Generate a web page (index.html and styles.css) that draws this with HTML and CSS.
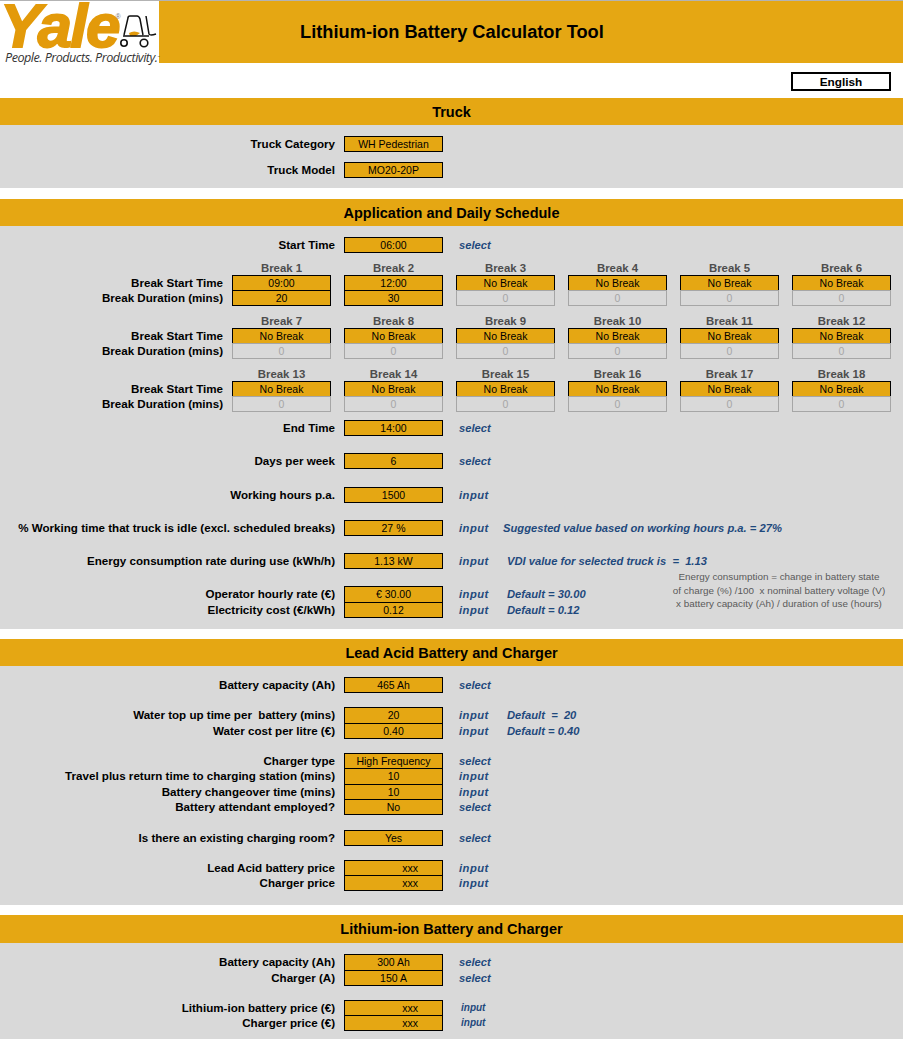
FILE: index.html
```html
<!DOCTYPE html>
<html lang="en">
<head>
<meta charset="utf-8">
<title>Lithium-ion Battery Calculator Tool</title>
<link rel="stylesheet" href="styles.css">
</head>
<body>
<header class="topbar">
  <svg class="logo" viewBox="0 0 159 62" role="img" aria-label="Yale logo">
    <rect width="159" height="62" fill="#fff"/>
    <text class="logo-word" x="0" y="45.5">Yale</text>
    <text class="logo-reg" x="115.5" y="18">®</text>
    <path d="M129 32 Q134 29 140 32 L136 35 L130 35 Z" fill="#e39a0a"/>
    <path d="M124 34 L128 17 Q128 15 130 15 L137 15 Q139 15 140 18 L143 34 M146 15 L149 33 Q150 35 156 33 M123 35 L149 35" fill="none" stroke="#111" stroke-width="1.5"/>
    <circle cx="124" cy="42" r="3.2" fill="#fff" stroke="#111" stroke-width="1.6"/>
    <circle cx="144" cy="42" r="3.8" fill="#fff" stroke="#111" stroke-width="1.6"/>
    <text class="logo-tag" x="5" y="61">People. Products. Productivity.<tspan class="logo-tm" dy="-4">™</tspan></text>
  </svg>
  <h1 class="title">Lithium-ion Battery Calculator Tool</h1>
</header>
<div class="langbar"><div class="lang">English</div></div>

<section class="section gap-11">
  <h2 class="section-head">Truck</h2>
  <div class="section-body pb-10">
    <div class="row"><div class="label">Truck Category</div><div class="box">WH Pedestrian</div></div>
    <div class="row mt-10"><div class="label">Truck Model</div><div class="box">MO20-20P</div></div>
  </div>
</section>

<section class="section gap-10">
  <h2 class="section-head">Application and Daily Schedule</h2>
  <div class="section-body pb-11">
    <div class="row"><div class="label">Start Time</div><div class="box">06:00</div><div class="hint">select</div></div>

    <div class="breaks mt-7">
      <div class="break-row"><div class="break-label"></div><div class="break-set">
        <div class="break-title">Break 1</div><div class="break-title">Break 2</div><div class="break-title">Break 3</div><div class="break-title">Break 4</div><div class="break-title">Break 5</div><div class="break-title">Break 6</div>
      </div></div>
      <div class="break-row"><div class="label break-label">Break Start Time</div><div class="break-set">
        <div class="box">09:00</div><div class="box">12:00</div><div class="box">No Break</div><div class="box">No Break</div><div class="box">No Break</div><div class="box">No Break</div>
      </div></div>
      <div class="break-row stack"><div class="label break-label">Break Duration (mins)</div><div class="break-set">
        <div class="box">20</div><div class="box">30</div><div class="box off">0</div><div class="box off">0</div><div class="box off">0</div><div class="box off">0</div>
      </div></div>
    </div>

    <div class="breaks mt-7">
      <div class="break-row"><div class="break-label"></div><div class="break-set">
        <div class="break-title">Break 7</div><div class="break-title">Break 8</div><div class="break-title">Break 9</div><div class="break-title">Break 10</div><div class="break-title">Break 11</div><div class="break-title">Break 12</div>
      </div></div>
      <div class="break-row"><div class="label break-label">Break Start Time</div><div class="break-set">
        <div class="box">No Break</div><div class="box">No Break</div><div class="box">No Break</div><div class="box">No Break</div><div class="box">No Break</div><div class="box">No Break</div>
      </div></div>
      <div class="break-row stack"><div class="label break-label">Break Duration (mins)</div><div class="break-set">
        <div class="box off">0</div><div class="box off">0</div><div class="box off">0</div><div class="box off">0</div><div class="box off">0</div><div class="box off">0</div>
      </div></div>
    </div>

    <div class="breaks mt-7">
      <div class="break-row"><div class="break-label"></div><div class="break-set">
        <div class="break-title">Break 13</div><div class="break-title">Break 14</div><div class="break-title">Break 15</div><div class="break-title">Break 16</div><div class="break-title">Break 17</div><div class="break-title">Break 18</div>
      </div></div>
      <div class="break-row"><div class="label break-label">Break Start Time</div><div class="break-set">
        <div class="box">No Break</div><div class="box">No Break</div><div class="box">No Break</div><div class="box">No Break</div><div class="box">No Break</div><div class="box">No Break</div>
      </div></div>
      <div class="break-row stack"><div class="label break-label">Break Duration (mins)</div><div class="break-set">
        <div class="box off">0</div><div class="box off">0</div><div class="box off">0</div><div class="box off">0</div><div class="box off">0</div><div class="box off">0</div>
      </div></div>
    </div>

    <div class="row mt-8"><div class="label">End Time</div><div class="box">14:00</div><div class="hint">select</div></div>
    <div class="row mt-17"><div class="label">Days per week</div><div class="box">6</div><div class="hint">select</div></div>
    <div class="row mt-18"><div class="label">Working hours p.a.</div><div class="box">1500</div><div class="hint hint-in">input</div></div>
    <div class="row mt-17"><div class="label">% Working time that truck is idle (excl. scheduled breaks)</div><div class="box">27 %</div><div class="hint hint-in">input</div><div class="note note-wide">Suggested value based on working hours p.a. = 27%</div></div>
    <div class="row mt-17"><div class="label">Energy consumption rate during use (kWh/h)</div><div class="box">1.13 kW</div><div class="hint hint-in">input</div><div class="note">VDI value for selected truck is &nbsp;=&nbsp; 1.13</div></div>
    <div class="rates mt-17">
      <div class="rates-rows">
        <div class="row"><div class="label">Operator hourly rate (€)</div><div class="box box-tall">€ 30.00</div><div class="hint hint-in">input</div><div class="note">Default = 30.00</div></div>
        <div class="row"><div class="label">Electricity cost (€/kWh)</div><div class="box">0.12</div><div class="hint hint-in">input</div><div class="note">Default = 0.12</div></div>
      </div>
      <p class="explain">Energy consumption = change in battery state<br>of charge (%) /100 &nbsp;x nominal battery voltage (V)<br>x battery capacity (Ah) / duration of use (hours)</p>
    </div>
  </div>
</section>

<section class="section gap-10">
  <h2 class="section-head">Lead Acid Battery and Charger</h2>
  <div class="section-body pb-14">
    <div class="row"><div class="label">Battery capacity (Ah)</div><div class="box">465 Ah</div><div class="hint">select</div></div>
    <div class="row mt-14"><div class="label">Water top up time per &nbsp;battery (mins)</div><div class="box box-tall">20</div><div class="hint hint-in">input</div><div class="note">Default &nbsp;= &nbsp;20</div></div>
    <div class="row"><div class="label">Water cost per litre (€)</div><div class="box">0.40</div><div class="hint hint-in">input</div><div class="note">Default = 0.40</div></div>
    <div class="row mt-14"><div class="label">Charger type</div><div class="box">High Frequency</div><div class="hint">select</div></div>
    <div class="row stack"><div class="label">Travel plus return time to charging station (mins)</div><div class="box box-tall">10</div><div class="hint hint-in">input</div></div>
    <div class="row"><div class="label">Battery changeover time (mins)</div><div class="box">10</div><div class="hint hint-in">input</div></div>
    <div class="row stack"><div class="label">Battery attendant employed?</div><div class="box">No</div><div class="hint">select</div></div>
    <div class="row mt-15"><div class="label">Is there an existing charging room?</div><div class="box">Yes</div><div class="hint">select</div></div>
    <div class="row mt-14"><div class="label">Lead Acid battery price</div><div class="box offset">xxx</div><div class="hint hint-in">input</div></div>
    <div class="row stack"><div class="label">Charger price</div><div class="box offset">xxx</div><div class="hint hint-in">input</div></div>
  </div>
</section>

<section class="section">
  <h2 class="section-head tall-head">Lithium-ion Battery and Charger</h2>
  <div class="section-body pb-20">
    <div class="row"><div class="label">Battery capacity (Ah)</div><div class="box box-tall">300 Ah</div><div class="hint">select</div></div>
    <div class="row"><div class="label">Charger (A)</div><div class="box">150 A</div><div class="hint">select</div></div>
    <div class="row mt-14"><div class="label">Lithium-ion battery price (€)</div><div class="box offset">xxx</div><div class="hint hint-small">input</div></div>
    <div class="row stack"><div class="label">Charger price (€)</div><div class="box offset">xxx</div><div class="hint hint-small">input</div></div>
  </div>
</section>
</body>
</html>
```
FILE: styles.css
```css
* { box-sizing: border-box; }
html, body { margin: 0; padding: 0; }
body {
  background: #fff;
  color: #000;
  font-family: "Liberation Sans", Arial, sans-serif;
  font-size: 11.6px;
  height: 1039px;
  overflow: hidden;
}
.topbar {
  display: flex;
  align-items: center;
  height: 63px;
  background: #e5a713;
  border-top: 1px solid #b3b3b3;
}
.logo { display: block; width: 159px; height: 62px; flex: none; overflow: visible; }
.logo-word {
  font-family: "Liberation Sans", Arial, sans-serif;
  font-weight: 700;
  font-style: italic;
  font-size: 62px;
  letter-spacing: -1.6px;
  fill: #e39a0a;
  stroke: #e39a0a;
  stroke-width: 1.8px;
}
.logo-reg { font-size: 7px; fill: #777; }
.logo-tag {
  font-family: "Open Sans", "Liberation Sans", sans-serif;
  font-style: italic;
  font-size: 12.6px;
  letter-spacing: -0.5px;
  fill: #333;
}
.logo-tm { font-size: 3px; }
.title {
  margin: 0 0 0 141px;
  font-size: 18.25px;
  font-weight: 700;
  line-height: 60px;
  white-space: nowrap;
}
.langbar {
  display: flex;
  justify-content: flex-end;
  height: 35px;
  padding: 9px 12px 0 0;
}
.lang {
  width: 100px;
  height: 19px;
  border: 2px solid #000;
  font-size: 11.8px;
  font-weight: 700;
  line-height: 16px;
  text-align: center;
}
.section-head {
  margin: 0;
  height: 27px;
  background: #e5a713;
  font-size: 14.5px;
  font-weight: 700;
  line-height: 29px;
  text-align: center;
}
.tall-head { height: 28px; }
.section-body {
  background: #d9d9d9;
  padding-top: 11px;
  overflow: hidden;
}
.gap-11 { margin-bottom: 11px; }
.gap-10 { margin-bottom: 10px; }
.pb-10 { padding-bottom: 10px; }
.pb-11 { padding-bottom: 11px; }
.pb-14 { padding-bottom: 14px; }
.pb-20 { padding-bottom: 20px; }
.mt-7 { margin-top: 7px; }
.mt-8 { margin-top: 8px; }
.mt-10 { margin-top: 10px; }
.mt-14 { margin-top: 14px; }
.mt-15 { margin-top: 15px; }
.mt-17 { margin-top: 17px; }
.mt-18 { margin-top: 18px; }
.row { display: flex; height: 16px; }
.stack { margin-top: -1px; }
.label {
  flex: none;
  width: 335px;
  font-weight: 700;
  line-height: 16px;
  text-align: right;
  white-space: nowrap;
}
.box {
  flex: none;
  width: 99px;
  height: 16px;
  margin-left: 9px;
  background: #e5a713;
  border: 1px solid #000;
  font-size: 10.5px;
  line-height: 14px;
  text-align: center;
  white-space: nowrap;
}
.box-tall { height: 17px; }
.off {
  background: transparent;
  border-color: #a6a6a6;
  color: #a6a6a6;
}
.offset { padding-left: 33px; }
.hint, .note {
  color: #1f497d;
  font-size: 11.2px;
  font-weight: 700;
  font-style: italic;
  line-height: 16px;
  white-space: nowrap;
}
.hint { width: 44px; margin-left: 16px; flex: none; }
.hint-in { letter-spacing: 0.5px; }
.hint-small {
  padding-left: 2px;
  font-size: 10px;
  letter-spacing: 0;
}
.note { margin-left: 4px; }
.note-wide { margin-left: 0; }
.break-row { display: flex; height: 16px; }
.break-row:first-child { height: 15px; }
.break-label { flex: none; width: 223px; }
.break-set {
  display: grid;
  grid-template-columns: repeat(6, 99px);
  column-gap: 13px;
  margin-left: 9px;
}
.break-set .box { margin-left: 0; }
.break-title {
  color: #4d4d4d;
  font-size: 11.4px;
  font-weight: 700;
  line-height: 16px;
  text-align: center;
}
.rates { display: flex; height: 32px; }
.rates-rows { flex: none; width: 672px; }
.explain {
  flex: none;
  width: 214px;
  margin: -16px 0 0 0;
  color: #595959;
  font-size: 9.9px;
  line-height: 13.5px;
  text-align: center;
  white-space: nowrap;
}
```
